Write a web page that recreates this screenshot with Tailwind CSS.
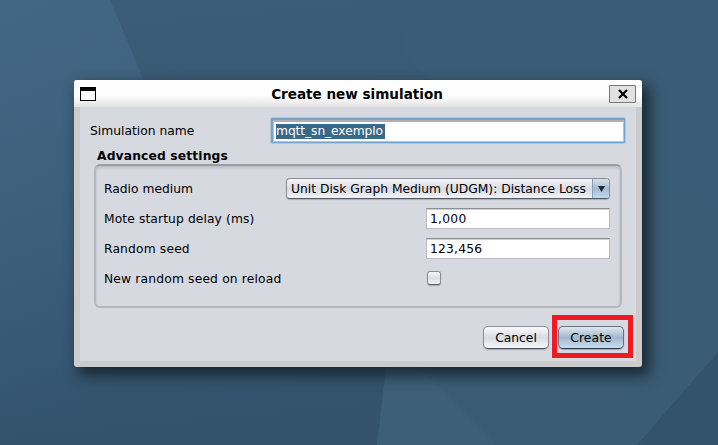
<!DOCTYPE html>
<html lang="en">
<head>
<meta charset="utf-8">
<title>Create new simulation</title>
<script src="https://cdn.jsdelivr.net/npm/@tailwindcss/browser@4"></script>
</head>
<body class="relative flex h-[445px] w-[718px] overflow-hidden bg-[#39597a] pt-[80px] pl-[74px] font-['DejaVu_Sans',sans-serif] text-[12.3px] leading-[16px] text-black">
<svg class="absolute inset-0" width="718" height="445" viewBox="0 0 718 445" aria-hidden="true">
  <defs>
    <linearGradient id="base" x1="0" y1="0" x2="0.15" y2="1"><stop offset="0" stop-color="#3b5d79"/><stop offset="1" stop-color="#33536d"/></linearGradient>
    <linearGradient id="left" gradientUnits="userSpaceOnUse" x1="0" y1="0" x2="160" y2="370"><stop offset="0" stop-color="#426784"/><stop offset="1" stop-color="#426784" stop-opacity="0"/></linearGradient>
  </defs>
  <rect width="718" height="445" fill="url(#base)"/>
  <path d="M0 0H110L297 445H0Z" fill="url(#left)"/>
  <path d="M402 0H718V330L402 55Z" fill="#3a5d77"/>
  <path d="M387 360L377 445H718V210L600 150Z" fill="#3a5d75"/>
  <path d="M387 360H412L497 445H377Z" fill="#3d5f78"/>
  <path d="M718 352V445H637Z" fill="#33536d"/>
</svg>
<main class="relative flex h-[287px] w-[568px] flex-col rounded-[3px] bg-[#cccccc] shadow-[6px_7px_14px_2px_rgba(20,30,38,0.8)]">
  <header class="flex h-[27px] shrink-0 items-center justify-between rounded-t-[3px] bg-linear-to-b from-white from-55% to-[#e3e3e3] px-[6px]">
    <svg width="27" height="14" viewBox="0 0 27 14" shape-rendering="crispEdges"><path d="M0 0H16V14H0Z"/><path d="M1 4H15V13H1Z" fill="#fff"/></svg>
    <h1 class="pt-px pr-[2px] text-[13.55px] leading-[18px] font-bold whitespace-nowrap">Create new simulation</h1>
    <button class="mb-[-1px] flex h-[18px] w-[27px] items-center justify-center rounded-[1px] border border-[#777] bg-[#e1e1e1]" aria-label="Close">
      <svg width="10" height="10" viewBox="0 0 10 10"><path d="M1 1L9 9M9 1L1 9" stroke="#000" stroke-width="2.2"/></svg>
    </button>
  </header>
  <section class="mx-[6px] flex h-[254px] flex-col bg-[#d6d9e0]">
    <div class="flex h-[42px] items-start justify-between pt-[10px] pr-[10px] pl-[10px]">
      <label class="pt-[6px]">Simulation name</label>
      <div class="h-[27px] w-[356px] rounded-[2px] border border-[#b4c6dc] bg-[#73a4d1] p-[1.5px]">
        <div class="flex h-full w-full items-center border border-t-2 border-[#c0c2c6] border-t-[#b0b0b2] bg-white pl-[2.5px]"><span class="h-[15px] w-[109px] bg-[#39698a] leading-[15px] tracking-[-0.1px] whitespace-nowrap text-white">mqtt_sn_exemplo</span></div>
      </div>
    </div>
    <h2 class="h-[15px] pl-[17px] leading-[15px] font-bold tracking-[0.14px] whitespace-nowrap">Advanced settings</h2>
    <div class="ml-[14px] flex h-[144px] w-[528px] flex-col gap-[9px] rounded-[6px] border-2 border-[#b4b7bd] border-t-[#999ca1] px-[8px] pt-[12px] shadow-[inset_0_2px_3px_rgba(80,84,90,0.2)]">
      <div class="flex h-[21px] items-center justify-between pr-[2px]"><label>Radio medium</label>
        <div class="flex h-[21px] w-[324px] items-stretch overflow-hidden rounded-[4px] border border-[#8b8e96] border-b-[#535761] bg-linear-to-b from-[#f5f6f9] via-[#d9dce2] to-[#f1f3f8] shadow-[0_1px_1px_rgba(90,94,102,0.35)]">
          <span class="flex-1 pl-1 leading-[20px] whitespace-nowrap">Unit Disk Graph Medium (UDGM): Distance Loss</span>
          <span class="flex w-[17px] items-center justify-center border-l border-[#8ba3ba] bg-linear-to-b from-[#d7e1eb] via-[#a4bbd0] to-[#c2daf0]"><svg width="7" height="6" viewBox="0 0 7 6"><path d="M0 0H7L3.5 6Z" fill="#1d252d"/></svg></span>
        </div>
      </div>
      <div class="flex h-[21px] items-center justify-between pr-[2px]"><label class="tracking-[0.1px]">Mote startup delay (ms)</label>
        <div class="h-[21px] w-[184px] border border-[#bbbcc0] border-t-[#8d8e92] bg-white pl-[3px] leading-[20px] tracking-[0.25px] shadow-[inset_0_1px_0_#d0d0d2]">1,000</div>
      </div>
      <div class="flex h-[21px] items-center justify-between pr-[2px]"><label class="tracking-[0.15px]">Random seed</label>
        <div class="h-[21px] w-[184px] border border-[#bbbcc0] border-t-[#8d8e92] bg-white pl-[3px] leading-[20px] tracking-[0.2px] shadow-[inset_0_1px_0_#d0d0d2]">123,456</div>
      </div>
      <div class="flex h-[21px] items-center justify-between pr-[2px]"><label class="tracking-[0.16px]">New random seed on reload</label>
        <div class="w-[183px]"><div class="-mt-px h-[14px] w-[14px] rounded-[3px] border border-[#8b8e96] border-b-[#5a5e67] bg-linear-to-b from-[#f6f7f9] via-[#dbdee3] to-[#f0f2f6] shadow-[0_1px_1px_rgba(90,94,102,0.35)]"></div></div>
      </div>
    </div>
    <div class="mt-[18px] flex justify-end gap-[9px] pr-[12px]">
      <button class="h-[23px] w-[66px] rounded-[5px] border border-[#8b8e96] border-b-[#4f535d] bg-linear-to-b from-[#f9fafc] via-[#d9dce2] to-[#f5f7fb] shadow-[0_1px_1px_rgba(90,94,102,0.4)]">Cancel</button>
      <div class="relative">
        <button class="h-[23px] w-[66px] rounded-[5px] border border-[#5d7389] border-b-[#27394d] bg-linear-to-b from-[#e0e8ef] via-[#a3b8cc] to-[#c6ddf3] tracking-[0.1px] shadow-[0_1px_1px_rgba(90,94,102,0.4)]">Create</button>
        <div class="pointer-events-none absolute -top-[11px] -left-[6px] h-[43px] w-[81px] border-5 border-[#ed1c24]"></div>
      </div>
    </div>
  </section>
</main>
</body>
</html>
